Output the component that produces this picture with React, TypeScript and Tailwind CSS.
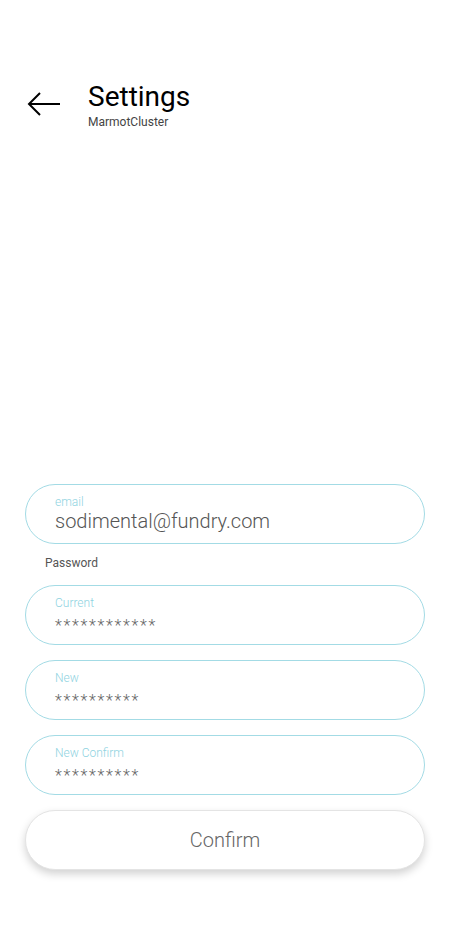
import { ReactNode } from 'react';

const font = { fontFamily: 'Roboto, "Noto Sans", sans-serif' };

function Field({ label, children }: { label: string; children: ReactNode }) {
  return (
    <div className="flex h-[60px] w-full flex-col rounded-full border border-[#a3dbe5] bg-white pl-[29px] pt-[10px]">
      <span className="text-[12px] font-light leading-[14px] text-[#8fd3df]">{label}</span>
      {children}
    </div>
  );
}

function Stars({ value }: { value: string }) {
  return (
    <span className="mt-[7px] text-[16px] font-light leading-[18px] tracking-[1.7px] text-[#666]">{value}</span>
  );
}

export default function App() {
  return (
    <div className="flex min-h-[950px] w-[450px] flex-col bg-white" style={font}>
      <header className="flex items-start pl-[27px] pt-[82px]">
        <button className="mt-[9px] text-black">
          <svg width="34" height="26" viewBox="0 0 34 26" fill="none" stroke="currentColor" strokeWidth="2">
            <path d="M2 13h31" />
            <path d="M13 2 2 13l11 11" />
          </svg>
        </button>
        <div className="ml-[27px] flex flex-col">
          <h1 className="text-[28px] font-normal leading-[30px] text-black">Settings</h1>
          <span className="mt-[3px] text-[12px] leading-[14px] text-[#444]">MarmotCluster</span>
        </div>
      </header>

      <form className="mt-[355px] flex flex-col px-[25px]">
        <Field label="email">
          <span className="text-[20px] font-light leading-[24px] text-[#555]">sodimental@fundry.com</span>
        </Field>
        <span className="mb-[15px] ml-[20px] mt-[12px] text-[12px] leading-[14px] text-[#555]">Password</span>
        <div className="flex flex-col gap-[15px]">
          <Field label="Current">
            <Stars value="************" />
          </Field>
          <Field label="New">
            <Stars value="**********" />
          </Field>
          <Field label="New Confirm">
            <Stars value="**********" />
          </Field>
          <button
            type="button"
            className="h-[60px] w-full rounded-full border border-[#e4e4e4] bg-white text-[20px] font-light text-[#666] shadow-[0_4px_8px_rgba(0,0,0,0.18)]"
          >
            Confirm
          </button>
        </div>
      </form>
    </div>
  );
}
